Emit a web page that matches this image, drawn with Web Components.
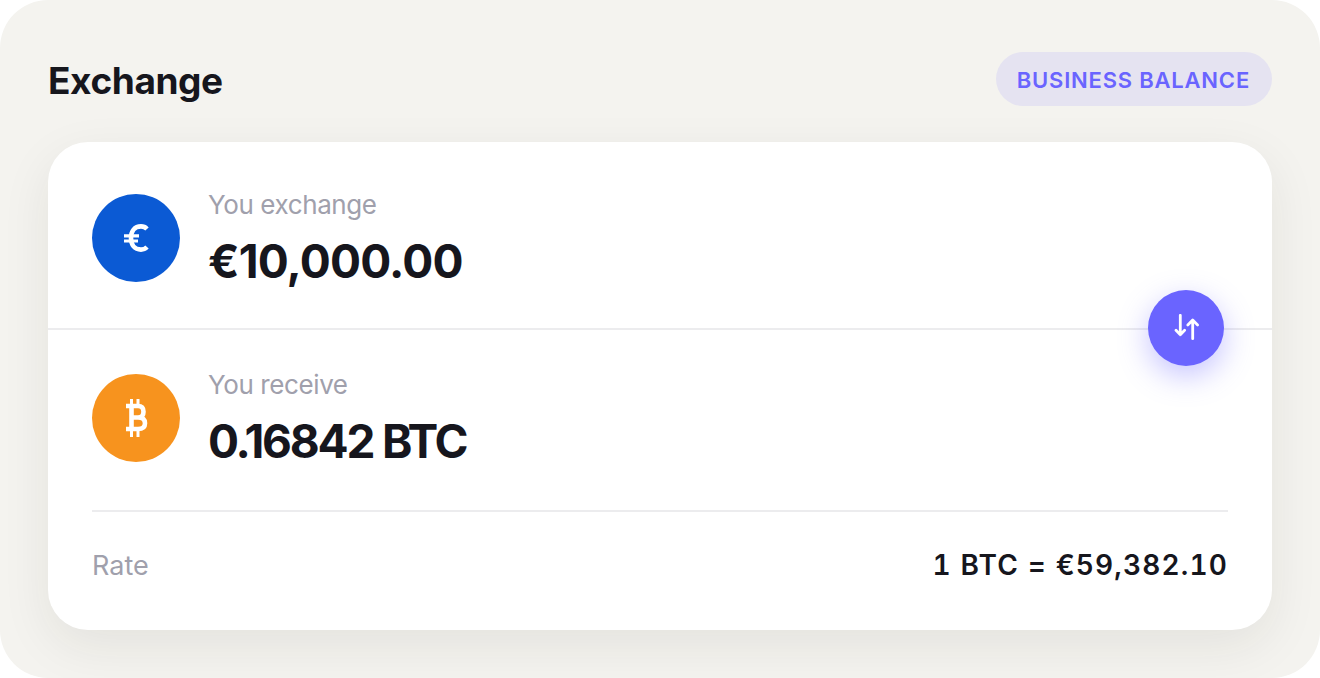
<!DOCTYPE html>
<html>
<head>
<meta charset="utf-8">
<title>Exchange</title>
<style>
    html, body { margin: 0; height: 100%; background: #fff; }
    body { font-family: Inter, "Liberation Sans", sans-serif; color: #16161d; }
</style>
</head>
<body>
<exchange-panel>
    <span slot="title">Exchange</span>
    <span slot="badge">BUSINESS BALANCE</span>
    <exchange-row label="You exchange" value="€10,000.00" color="#0b5ad4" spacing="-0.8">
        <svg viewBox="0 0 28 28" width="28" height="28" fill="none" stroke="#fff" stroke-width="4.600">
            <path d="M25 5C23.500 3.400 21.500 2.400 19 2.400 12.500 2.400 9 7.200 9 14s3.500 11.600 10 11.600c2.500 0 4.500-1 6-2.600"/>
            <path d="M2 11.800h15M2 17h14" stroke-width="3.200"/>
        </svg>
    </exchange-row>
    <exchange-row label="You receive" value="0.16842 BTC" color="#f7931e" spacing="-2.2" class="second">
        <svg viewBox="0 0 26 40" width="26" height="40" fill="none" stroke="#fff" stroke-width="4.600">
            <path d="M3 8h12c4 0 5.500 2.500 5.500 5.700s-1.500 5.800-5.500 5.800H8M15 19.500c5 0 7 2.500 7 5.700s-2 5.800-7 5.800H3M8.500 8v23"/>
            <path d="M8.500 1v7M15 1v7M8.500 31v8M15 31v8" stroke-width="3"/>
        </svg>
    </exchange-row>
    <rate-line label="Rate" value="1 BTC = €59,382.10"></rate-line>
    <swap-button slot="float"></swap-button>
</exchange-panel>

<script>
class ExchangePanel extends HTMLElement {
    constructor() {
        super();
        this.attachShadow({ mode: 'open' });
        this.shadowRoot.innerHTML = `
        <style>
            :host {
                display: block;
                box-sizing: border-box;
                height: 678px;
                padding: 52px 48px 48px;
                border-radius: 48px;
                background: #f4f3ef;
                overflow: hidden;
            }
            header {
                display: flex;
                justify-content: space-between;
                align-items: center;
                height: 54px;
                margin-bottom: 36px;
            }
            h1 {
                margin: 0;
                padding-top: 2px;
                font-size: 37px;
                font-weight: 700;
                letter-spacing: -0.4px;
            }
            .badge {
                display: flex;
                align-items: center;
                box-sizing: border-box;
                height: 54px;
                padding: 2px 22px 0 21px;
                border-radius: 27px;
                background: #e5e3f1;
                color: #6a64ff;
                font-size: 22px;
                font-weight: 600;
                letter-spacing: 0.8px;
            }
            .card {
                position: relative;
                height: 488px;
                border-radius: 40px;
                background: #fff;
                box-shadow: 0 16px 50px rgba(40, 38, 30, 0.08);
            }
            .float {
                position: absolute;
                right: 48px;
                top: 148px;
            }
        </style>
        <header>
            <h1><slot name="title"></slot></h1>
            <div class="badge"><slot name="badge"></slot></div>
        </header>
        <section class="card">
            <slot></slot>
            <div class="float"><slot name="float"></slot></div>
        </section>
        `;
    }
}

class ExchangeRow extends HTMLElement {
    constructor() {
        super();
        this.attachShadow({ mode: 'open' });
    }

    connectedCallback() {
        this.shadowRoot.innerHTML = `
        <style>
            :host {
                display: flex;
                box-sizing: border-box;
                gap: 28px;
                align-items: flex-start;
                height: 188px;
                padding: 52px 44px 0;
                border-bottom: 2px solid #ececee;
            }
            :host(.second) {
                height: 182px;
                margin: 0 44px;
                padding: 44px 0 0;
            }
            .icon {
                flex: none;
                display: flex;
                align-items: center;
                justify-content: center;
                width: 88px;
                height: 88px;
                border-radius: 50%;
                background: ${this.getAttribute('color')};
            }
            .label {
                margin-top: -6px;
                font-size: 26px;
                line-height: 34px;
                color: #a0a0ac;
                letter-spacing: -0.4px;
            }
            .value {
                margin-top: 11px;
                font-size: 46px;
                line-height: 56px;
                font-weight: 700;
                letter-spacing: ${this.getAttribute('spacing')}px;
            }
        </style>
        <div class="icon"><slot></slot></div>
        <div>
            <div class="label">${this.getAttribute('label')}</div>
            <div class="value">${this.getAttribute('value')}</div>
        </div>
        `;
    }
}

class RateLine extends HTMLElement {
    constructor() {
        super();
        this.attachShadow({ mode: 'open' });
    }

    connectedCallback() {
        this.shadowRoot.innerHTML = `
        <style>
            :host {
                display: flex;
                justify-content: space-between;
                align-items: center;
                height: 106px;
                padding: 0 44px;
                font-size: 28px;
            }
            .label { font-size: 27px; color: #a0a0ac; }
            .value { font-weight: 600; letter-spacing: 1.15px; font-variant-numeric: tabular-nums; }
        </style>
        <span class="label">${this.getAttribute('label')}</span>
        <span class="value">${this.getAttribute('value')}</span>
        `;
    }
}

class SwapButton extends HTMLElement {
    constructor() {
        super();
        this.attachShadow({ mode: 'open' });
        this.shadowRoot.innerHTML = `
        <style>
            :host {
                display: flex;
                align-items: center;
                justify-content: center;
                width: 76px;
                height: 76px;
                border-radius: 50%;
                background: #6a64ff;
                box-shadow: 0 10px 30px rgba(106, 100, 255, 0.38);
            }
        </style>
        <svg viewBox="0 0 28 28" width="28" height="28" fill="none" stroke="#fff" stroke-width="2.800" stroke-linecap="round" stroke-linejoin="round">
            <path d="M8.300 1.300v19.400M4 16.300l4.300 4.400 4.300-4.400"/>
            <path d="M20.700 24.700V6.300M15.800 11l4.900-4.900 4.900 4.900"/>
        </svg>
        `;
    }
}

customElements.define('exchange-panel', ExchangePanel);
customElements.define('exchange-row', ExchangeRow);
customElements.define('rate-line', RateLine);
customElements.define('swap-button', SwapButton);
</script>
</body>
</html>
